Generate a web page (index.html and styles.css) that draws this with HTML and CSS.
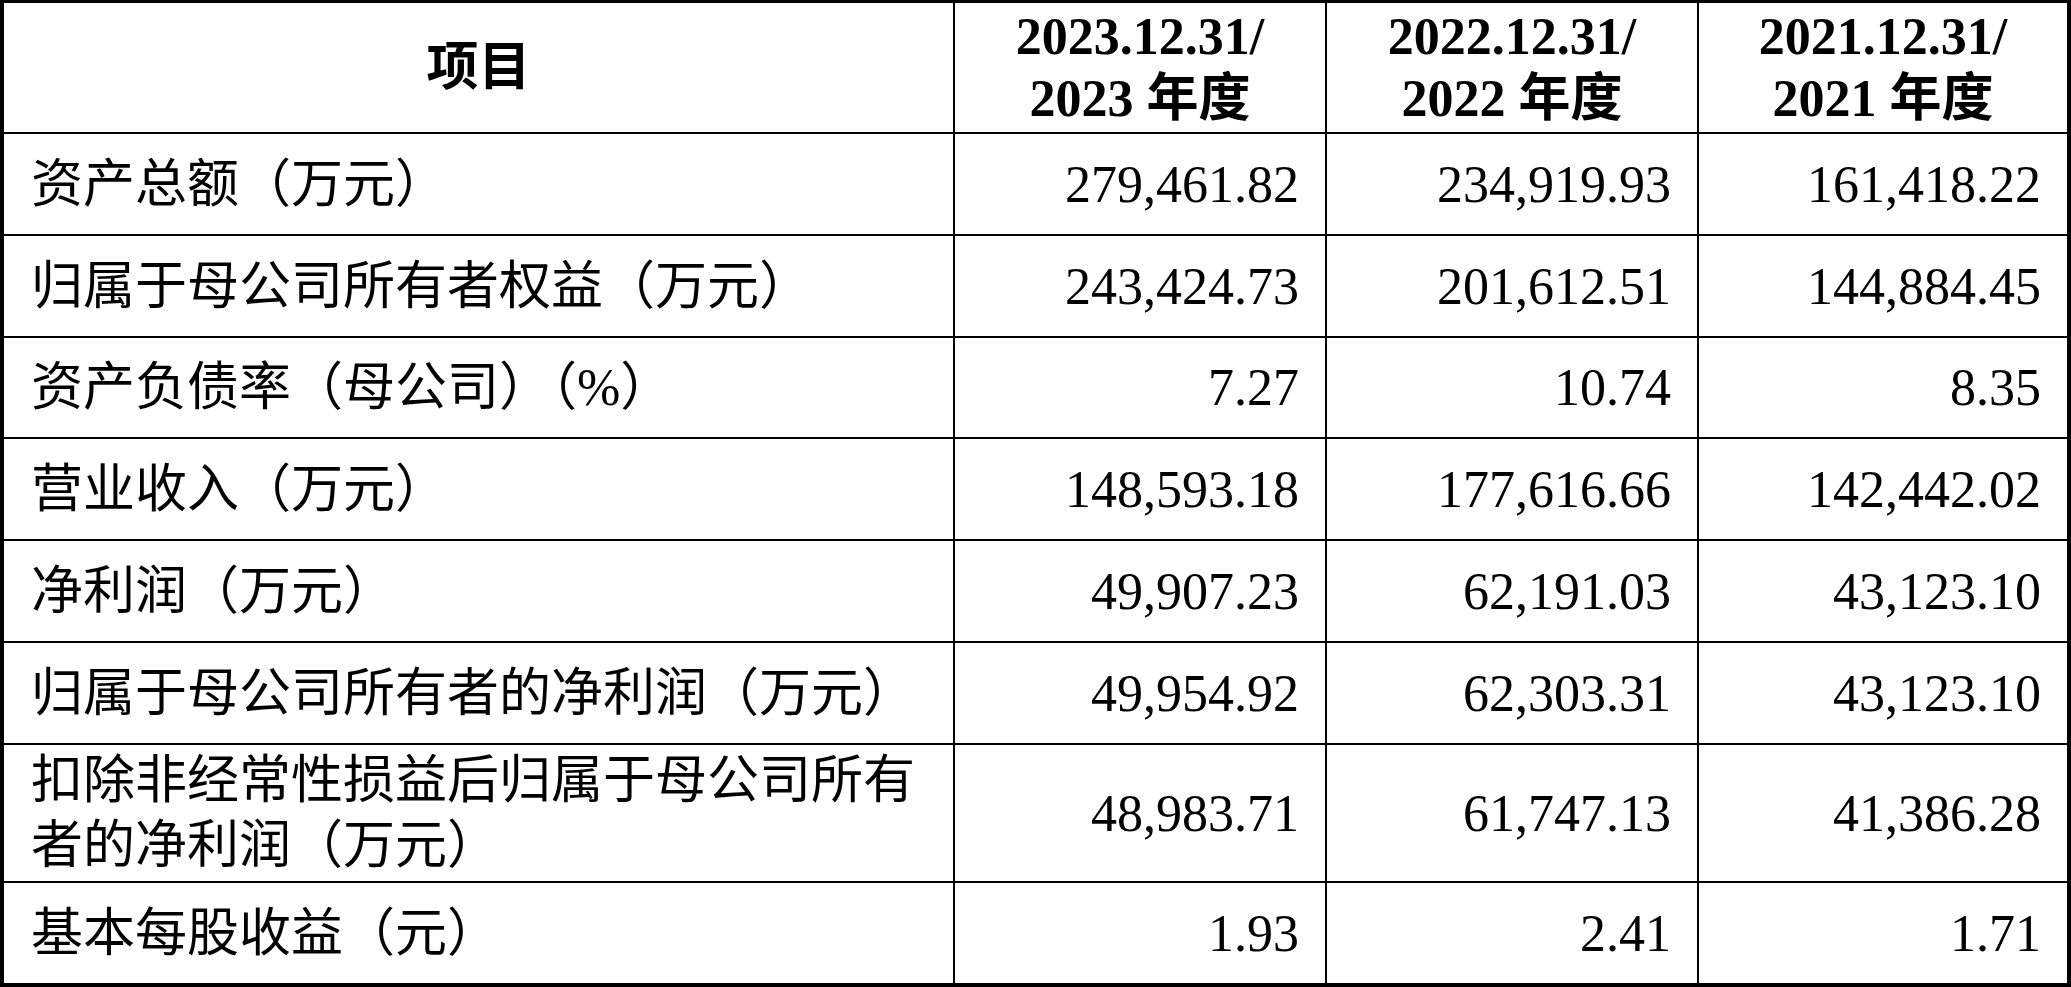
FILE: index.html
```html
<!DOCTYPE html>
<html lang="zh-CN">
<head>
<meta charset="utf-8">
<title>主要财务数据</title>
<link rel="stylesheet" href="styles.css">
</head>
<body>
<div class="table">
  <div class="cell head">项目</div>
  <div class="cell head">2023.12.31/<br>2023 年度</div>
  <div class="cell head">2022.12.31/<br>2022 年度</div>
  <div class="cell head last-col">2021.12.31/<br>2021 年度</div>

  <div class="cell label">资产总额（万元）</div>
  <div class="cell num">279,461.82</div>
  <div class="cell num">234,919.93</div>
  <div class="cell num last-col">161,418.22</div>

  <div class="cell label">归属于母公司所有者权益（万元）</div>
  <div class="cell num">243,424.73</div>
  <div class="cell num">201,612.51</div>
  <div class="cell num last-col">144,884.45</div>

  <div class="cell label">资产负债率（母公司）（%）</div>
  <div class="cell num">7.27</div>
  <div class="cell num">10.74</div>
  <div class="cell num last-col">8.35</div>

  <div class="cell label">营业收入（万元）</div>
  <div class="cell num">148,593.18</div>
  <div class="cell num">177,616.66</div>
  <div class="cell num last-col">142,442.02</div>

  <div class="cell label">净利润（万元）</div>
  <div class="cell num">49,907.23</div>
  <div class="cell num">62,191.03</div>
  <div class="cell num last-col">43,123.10</div>

  <div class="cell label">归属于母公司所有者的净利润（万元）</div>
  <div class="cell num">49,954.92</div>
  <div class="cell num">62,303.31</div>
  <div class="cell num last-col">43,123.10</div>

  <div class="cell label">扣除非经常性损益后归属于母公司所有者的净利润（万元）</div>
  <div class="cell num">48,983.71</div>
  <div class="cell num">61,747.13</div>
  <div class="cell num last-col">41,386.28</div>

  <div class="cell label last-row">基本每股收益（元）</div>
  <div class="cell num last-row">1.93</div>
  <div class="cell num last-row">2.41</div>
  <div class="cell num last-row last-col">1.71</div>
</div>
</body>
</html>
```

FILE: styles.css
```css
html, body {
  margin: 0;
  padding: 0;
  background: #ffffff;
}

.table {
  box-sizing: border-box;
  width: 2071px;
  height: 987px;
  display: grid;
  grid-template-columns: 951px 372px 372px 368px;
  grid-template-rows: 131px 102px 102px 101px 102px 102px 102px 138px 100px;
  border: 4px solid #000;
  border-top-width: 3px;
  font-family: "Liberation Serif", "Noto Sans CJK SC", serif;
  font-size: 52px;
  color: #000;
}

.cell {
  box-sizing: border-box;
  display: flex;
  align-items: center;
  border-right: 2px solid #000;
  border-bottom: 2px solid #000;
  line-height: 65px;
  overflow: hidden;
}

.cell.last-col {
  border-right: none;
}

.cell.last-row {
  border-bottom: none;
}

.head {
  justify-content: center;
  text-align: center;
  font-weight: bold;
  line-height: 62px;
}

.label {
  padding: 0 27px;
}

.num {
  justify-content: flex-end;
  padding-right: 26px;
}
```
